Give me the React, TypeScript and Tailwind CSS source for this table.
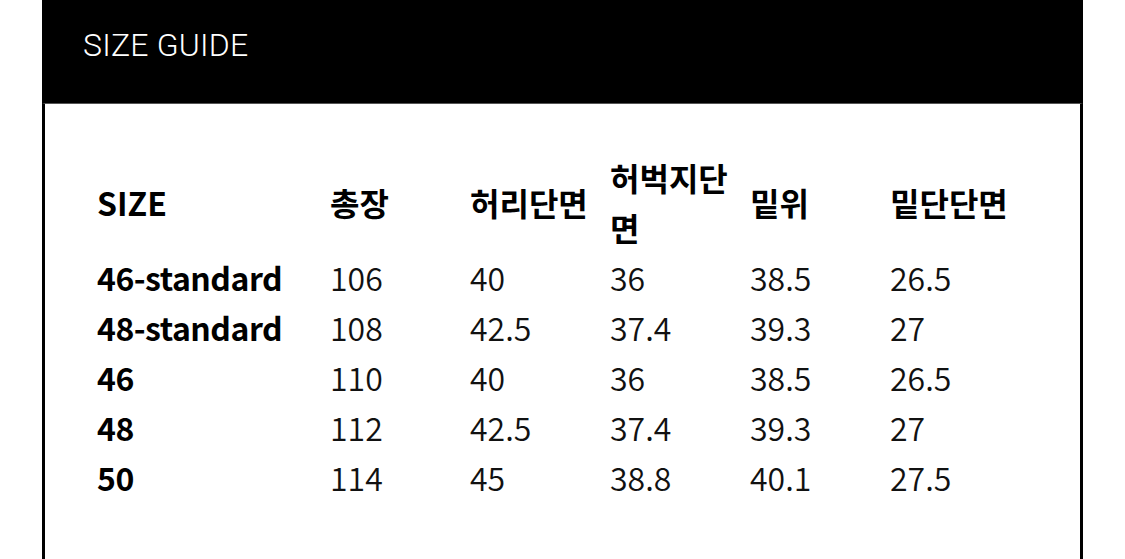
const columns = ["SIZE", "총장", "허리단면", "허벅지단면", "밑위", "밑단단면"];

const rows = [
  ["46-standard", "106", "40", "36", "38.5", "26.5"],
  ["48-standard", "108", "42.5", "37.4", "39.3", "27"],
  ["46", "110", "40", "36", "38.5", "26.5"],
  ["48", "112", "42.5", "37.4", "39.3", "27"],
  ["50", "114", "45", "38.8", "40.1", "27.5"],
];

const grid = "grid grid-cols-[233px_140px_140px_140px_140px_140px]";

export default function App() {
  return (
    <div className="min-h-[559px] bg-white">
      <div className="ml-[42px] w-[1041px]">
        <div className="h-[103px] bg-black pl-[41px] pt-[25px]">
          <h2 className="font-['Roboto',sans-serif] text-[32px] font-light leading-[40px] tracking-[0.2px] text-white">
            SIZE GUIDE
          </h2>
        </div>

        <div className="h-[456px] border-x-[3px] border-t border-x-black border-t-[#555] px-[52px] pt-[48px] font-['Noto_Sans_CJK_KR','Noto_Sans',sans-serif] text-[32px] leading-[50px] text-black">
          <div className={`${grid} items-center font-bold`}>
            {columns.map((col) => (
              <div key={col} className="pr-2">
                {col}
              </div>
            ))}
          </div>

          {rows.map((row) => (
            <div key={row[0]} className={`${grid} h-[50px]`}>
              {row.map((cell, i) => (
                <div
                  key={i}
                  className={
                    i === 0
                      ? "whitespace-nowrap font-bold tracking-[-0.5px]"
                      : "font-[350] text-[#111]"
                  }
                >
                  {cell}
                </div>
              ))}
            </div>
          ))}
        </div>
      </div>
    </div>
  );
}
